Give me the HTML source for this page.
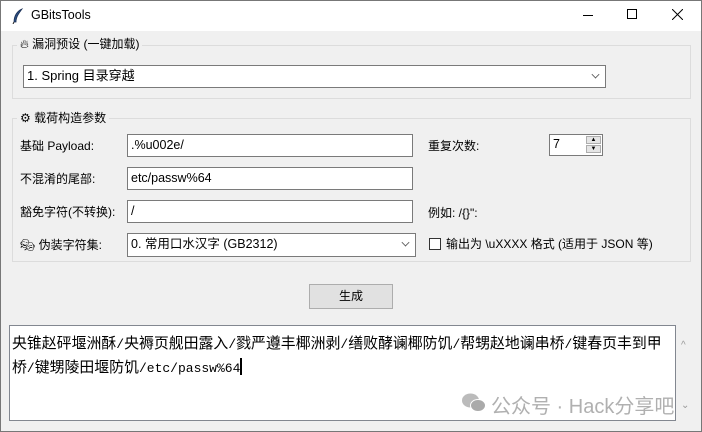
<!DOCTYPE html>
<html><head><meta charset="utf-8"><style>
*{margin:0;padding:0;box-sizing:border-box}
body{width:702px;height:432px;overflow:hidden;background:#f0f0f0;font-family:"Liberation Sans","Noto Sans CJK SC",sans-serif;font-size:12px;color:#000;position:relative}
.a{position:absolute;white-space:nowrap}
.win{position:absolute;left:0;top:0;width:702px;height:432px;border:1px solid #777;pointer-events:none}
.title{position:absolute;left:0;top:0;width:702px;height:31px;background:#fff}
.frame{position:absolute;border:1px solid #dcdcdc}
.lbl{position:absolute;background:#f0f0f0;padding:0 3px;line-height:14px}
.ent{position:absolute;background:#fff;border:1px solid #7a7a7a;padding-left:3px;font-size:12.5px;line-height:20px}
.chev{position:absolute;right:6px;top:5px;width:7px;height:7px;border-right:1px solid #555;border-bottom:1px solid #555;transform:rotate(45deg) scale(.8)}
.m{font-family:'Liberation Mono',monospace;font-size:13px}
</style></head><body>
<div class="title"></div>
<svg class="a" style="left:12px;top:8px" width="12" height="16" viewBox="0 0 12 16"><path d="M10 1 C5 3 2 8 2 14 L4 14 C4 9 7 5 10 1Z" fill="#2a4d80" stroke="#1b2f55" stroke-width=".8"/><path d="M2 14 L1 16" stroke="#222"/></svg>
<div class="a" style="left:31px;top:8px;font-size:12.5px">GBitsTools</div>
<div class="a" style="left:583px;top:15px;width:10px;height:1px;background:#000"></div>
<div class="a" style="left:627px;top:9px;width:10px;height:10px;border:1px solid #000"></div>
<svg class="a" style="left:672px;top:9px" width="11" height="11"><path d="M0 0L11 11M11 0L0 11" stroke="#000" stroke-width="1"/></svg>

<div class="frame" style="left:12px;top:45px;width:679px;height:54px"></div>
<div class="lbl" style="left:17px;top:37px">&#x1F525;&#xFE0E; 漏洞预设 (一键加载)</div>
<div class="ent" style="left:23px;top:65px;width:583px;height:23px;font-size:13px">1. Spring 目录穿越<span class="chev"></span></div>

<div class="frame" style="left:12px;top:118px;width:679px;height:144px"></div>
<div class="lbl" style="left:17px;top:111px">⚙ 载荷构造参数</div>

<div class="a" style="left:20px;top:137px">基础 Payload:</div>
<div class="ent" style="left:127px;top:134px;width:286px;height:23px">.%u002e/</div>
<div class="a" style="left:20px;top:170px">不混淆的尾部:</div>
<div class="ent" style="left:127px;top:167px;width:286px;height:23px">etc/passw%64</div>
<div class="a" style="left:20px;top:203px">豁免字符(不转换):</div>
<div class="ent" style="left:127px;top:200px;width:286px;height:23px">/</div>
<div class="a" style="left:20px;top:236px">🎭&#xFE0E; 伪装字符集:</div>
<div class="ent" style="left:127px;top:233px;width:289px;height:24px">0. 常用口水汉字 (GB2312)<span class="chev"></span></div>

<div class="a" style="left:428px;top:137px">重复次数:</div>
<div class="ent" style="left:549px;top:134px;width:54px;height:22px;line-height:18px">7
<div class="a" style="left:36px;top:1px;width:15px;height:8px;background:#e5e5e5;border:1px solid #adadad;font-size:6px;line-height:7px;text-align:center">▲</div>
<div class="a" style="left:36px;top:10px;width:15px;height:8px;background:#e5e5e5;border:1px solid #adadad;font-size:6px;line-height:7px;text-align:center">▼</div>
</div>
<div class="a" style="left:428px;top:204px">例如: /{}":</div>
<div class="a" style="left:429px;top:238px;width:12px;height:12px;border:1px solid #333;background:#fff"></div>
<div class="a" style="left:446px;top:235px">输出为 \uXXXX 格式 (适用于 JSON 等)</div>

<div class="a" style="left:309px;top:284px;width:84px;height:25px;background:#e1e1e1;border:1px solid #adadad;text-align:center;line-height:23px">生成</div>

<div class="a" style="left:9px;top:325px;width:667px;height:96px;background:#fff;border:1px solid #828790"></div>
<div class="a" style="left:676px;top:325px;width:14px;height:96px;background:#f0f0f0"></div>
<div class="a" style="left:681px;top:340px;font-size:10px;color:#999">^</div>
<div class="a" style="left:12px;top:332px;font-family:'Noto Sans CJK SC',sans-serif;font-size:14.9px;line-height:22px">央锥赵砰堰洲酥<span class="m">/</span>央褥页舰田露入<span class="m">/</span>戮严遵丰椰洲剥<span class="m">/</span>缮败酵谰椰防饥<span class="m">/</span>帮甥赵地谰串桥<span class="m">/</span>键春页丰到甲<br>桥<span class="m">/</span>键甥陵田堰防饥<span class="m">/etc/passw%64</span><span style="display:inline-block;width:2px;height:17px;background:#000;vertical-align:-3px"></span></div>

<svg class="a" style="left:462px;top:393px" width="24" height="19"><ellipse cx="8.5" cy="7.5" rx="8.5" ry="7" fill="#bbb"/><ellipse cx="16" cy="12.5" rx="7.5" ry="6" fill="#aaa" stroke="#fff" stroke-width="1"/></svg>
<div class="a" style="left:491px;top:390px;font-size:20px;color:#b0b0b0">公众号 · Hack分享吧</div>
<div class="a" style="left:681px;top:400px;font-size:10px;color:#999">⌄</div>
<div class="win"></div>
</body></html>
